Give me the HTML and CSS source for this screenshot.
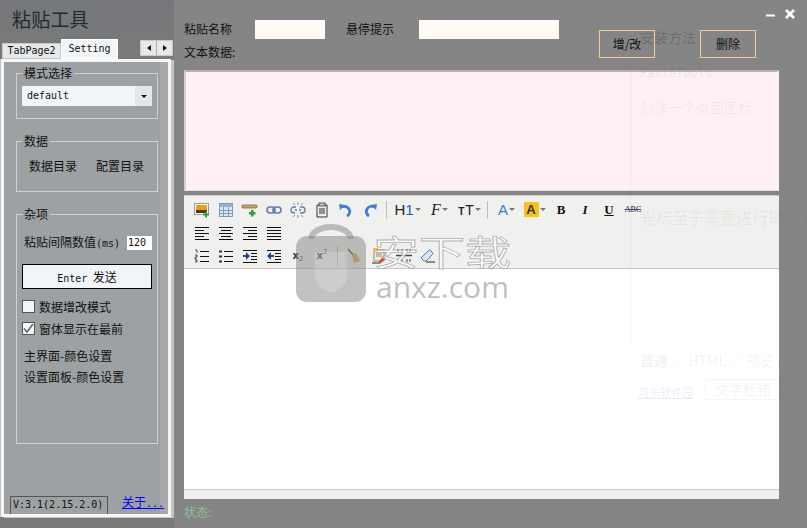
FILE: index.html
```html
<!DOCTYPE html>
<html lang="zh">
<head>
<meta charset="utf-8">
<title>粘贴工具</title>
<link rel="stylesheet" href="styles.css">
</head>
<body>
<div class="app">
  <aside class="side">
    <h1 class="title">粘贴工具</h1>
    <div class="tabrow">
      <span class="tab">TabPage2</span>
      <span class="tab active">Setting</span>
      <span class="spin"><i class="arr l"></i><i class="arr r"></i></span>
    </div>
    <div class="panel">
      <fieldset class="grp g1">
        <legend>模式选择</legend>
        <div class="combo"><span class="latin">default</span><span class="drop"><i></i></span></div>
      </fieldset>
      <fieldset class="grp g2">
        <legend>数据</legend>
        <div class="links"><span>数据目录</span><span>配置目录</span></div>
      </fieldset>
      <fieldset class="grp g3">
        <legend>杂项</legend>
        <div class="interval"><span>粘贴间隔数值<span class="latin">(ms)</span></span><span class="num latin">120</span></div>
        <div class="send"><span class="latin">Enter</span>&nbsp;&nbsp;发送</div>
        <div class="check"><span class="box"></span>数据增改模式</div>
        <div class="check c2"><span class="box"><svg width="13" height="13" viewBox="0 0 13 13"><path d="M2 6.500l3 3.500 6-8" fill="none" stroke="#666" stroke-width="1.600"/></svg></span>窗体显示在最前</div>
        <div class="plain p1">主界面-颜色设置</div>
        <div class="plain">设置面板-颜色设置</div>
      </fieldset>
      <div class="foot"><span class="ver latin">V:3.1(2.15.2.0)</span><a class="about" href="#">关于<span class="latin">...</span></a></div>
    </div>
  </aside>
  <main class="main">
    <div class="frow">
      <label class="l1">粘贴名称</label><span class="inp w1"></span>
      <label class="l2">悬停提示</label><span class="inp w2"></span>
      <span class="btn b1">增/改</span><span class="btn b2">删除</span>
    </div>
    <div class="tlabel">文本数据:</div>
    <div class="pink"></div>
    <div class="editor">
      <div class="bar">
        <div class="tr">
          <span class="ic"><svg width="16" height="16" viewBox="0 0 16 16"><rect x=".5" y="1.500" width="14" height="11" fill="#fff" stroke="#999"/><rect x="2" y="3" width="11" height="8" fill="#e8a010"/><rect x="2" y="8" width="11" height="3" fill="#4a3410"/><path d="M11 9.500h2v2h2v2h-2v2h-2v-2H9v-2h2z" fill="#3a9a3a"/></svg></span>
          <span class="ic"><svg width="16" height="16" viewBox="0 0 16 16"><rect x="1.500" y="1.500" width="13" height="13" fill="#dde8f5" stroke="#7f9db9"/><rect x="2" y="2" width="12" height="3" fill="#8fb0d8"/><path d="M1.500 8.500h13M1.500 11.500h13M5.500 5v9M10.500 5v9" stroke="#7f9db9"/></svg></span>
          <span class="ic"><svg width="18" height="16" viewBox="0 0 18 16"><rect x="1" y="3" width="15" height="3" rx="1" fill="#c8a468" stroke="#7a5a2a" stroke-width=".7"/><path d="M10 8h2.500v2h2v2.500h-2v2H10v-2H8V10h2z" fill="#3a9a3a"/></svg></span>
          <span class="ic"><svg width="16" height="16" viewBox="0 0 16 16"><g fill="none" stroke="#5d7da8" stroke-width="1.600"><rect x="1" y="5" width="8" height="6" rx="3"/><rect x="7" y="5" width="8" height="6" rx="3"/></g></svg></span>
          <span class="ic"><svg width="16" height="16" viewBox="0 0 16 16"><g fill="none" stroke="#5d7da8" stroke-width="1.300"><path d="M6 5H4a3 3 0 000 6h1M10 5h2a3 3 0 010 6h-2M5 8h2M9 8h2"/><path d="M8 0v3M8 13v3M3 1l2 2M13 1l-2 2M3 15l2-2M13 15l-2-2" stroke="#777" stroke-width=".8"/></g></svg></span>
          <span class="ic"><svg width="16" height="16" viewBox="0 0 16 16"><path d="M3 3h10v12H3z" fill="#eee" stroke="#333"/><rect x="5" y="1" width="6" height="3" fill="#ccc" stroke="#333" stroke-width=".8"/><path d="M5 7h6M5 9h6M5 11h6" stroke="#333"/></svg></span>
          <span class="ic"><svg width="16" height="16" viewBox="0 0 16 16"><path d="M1 2l6 1-5 5z" fill="#3b7fd4"/><path d="M4 5a5 5 0 115 9" fill="none" stroke="#3b7fd4" stroke-width="2.800"/></svg></span>
          <span class="ic"><svg width="16" height="16" viewBox="0 0 16 16"><path d="M15 2l-6 1 5 5z" fill="#3b7fd4"/><path d="M12 5a5 5 0 10-5 9" fill="none" stroke="#3b7fd4" stroke-width="2.800"/></svg></span>
          <span class="sep"></span>
          <span class="ic wide h"><span class="h1">H<b>1</b></span><i class="mini"></i></span>
          <span class="ic wide f"><span class="ff">F</span><i class="mini"></i></span>
          <span class="ic wide t"><span class="tt"><small>T</small>T</span><i class="mini"></i></span>
          <span class="sep"></span>
          <span class="ic wide a"><span class="ca">A</span><i class="mini"></i></span>
          <span class="ic wide a2"><span class="cb">A</span><i class="mini"></i></span>
          <span class="ic fmt b">B</span>
          <span class="ic fmt it">I</span>
          <span class="ic fmt un">U</span>
          <span class="ic fmt st">ABC</span>
        </div>
        <div class="tr">
          <span class="ic"><svg width="16" height="14" viewBox="0 0 16 14"><path d="M1 1.500h14M1 4.500h9M1 7.500h14M1 10.500h9M1 13.500h14" stroke="#111"/></svg></span>
          <span class="ic"><svg width="16" height="14" viewBox="0 0 16 14"><path d="M1 1.500h14M3 4.500h10M1 7.500h14M3 10.500h10M1 13.500h14" stroke="#111"/></svg></span>
          <span class="ic"><svg width="16" height="14" viewBox="0 0 16 14"><path d="M1 1.500h14M6 4.500h9M1 7.500h14M6 10.500h9M1 13.500h14" stroke="#111"/></svg></span>
          <span class="ic"><svg width="16" height="14" viewBox="0 0 16 14"><path d="M1 1.500h14M1 4.500h14M1 7.500h14M1 10.500h14M1 13.500h14" stroke="#111"/></svg></span>
        </div>
        <div class="tr">
          <span class="ic"><svg width="16" height="14" viewBox="0 0 16 14"><path d="M6 2.500h9M6 7.500h9M6 12.500h9" stroke="#111"/><path d="M1 1h2v3M1 6h2v2H1v2h2M1 11h2v2H1" fill="none" stroke="#225" stroke-width=".8"/></svg></span>
          <span class="ic"><svg width="16" height="14" viewBox="0 0 16 14"><path d="M6 2.500h9M6 7.500h9M6 12.500h9" stroke="#111"/><path d="M1 1.500h3v2H1zM1 6.500h3v2H1zM1 11.500h3v2H1z" fill="#334"/></svg></span>
          <span class="ic"><svg width="16" height="14" viewBox="0 0 16 14"><path d="M1 1.500h14M9 4.500h6M9 7.500h6M9 10.500h6M1 13.500h14" stroke="#111"/><path d="M1 6h3V3l4 4-4 4V8H1z" fill="#1f4a84"/></svg></span>
          <span class="ic"><svg width="16" height="14" viewBox="0 0 16 14"><path d="M1 1.500h14M9 4.500h6M9 7.500h6M9 10.500h6M1 13.500h14" stroke="#111"/><path d="M8 6H5V3L1 7l4 4V8h3z" fill="#1f4a84"/></svg></span>
          <span class="ic script"><b>x</b><sub>2</sub></span>
          <span class="ic script"><b>x</b><sup>2</sup></span>
          <span class="sep short"></span>
          <span class="ic broom"><svg width="16" height="16" viewBox="0 0 16 16"><path d="M2 1l6 7" stroke="#7a5a2a" stroke-width="1.500"/><path d="M6 7l4-2 4 8-6 2z" fill="#e0b060"/></svg></span>
          <span class="ic cnt"><svg width="18" height="18" viewBox="0 0 18 18"><rect x="3" y="3" width="10" height="11" fill="#f4f0d8" stroke="#888"/><path d="M2 1h5v3H2z" fill="#f0c030"/><path d="M5 7h6M5 9h6" stroke="#888"/><path d="M1 16h8" stroke="#225"/><path d="M8 14l7-7 2 2-7 7-2 1z" fill="#d8502a"/></svg></span>
          <span class="ic"><svg width="16" height="16" viewBox="0 0 16 16"><path d="M0 7.500h16" stroke="#444" stroke-width="1.500"/><path d="M2 1v3M6 1v3M11 1v3M14 1v3M2 11v3M6 11v3M11 11v3M14 11v3M1 2.500h2M10 2.500h2M13 2.500h2" stroke="#2b4c80"/></svg></span>
          <span class="ic"><svg width="16" height="16" viewBox="0 0 16 16"><path d="M1 10l7-7a2 2 0 013 0l1 1a2 2 0 010 3l-6 6H4z" fill="#dbe6f2" stroke="#5d7da8"/><path d="M6 14h9" stroke="#222"/></svg></span>
        </div>
      </div>
      <div class="canvas"></div>
      <div class="estat"></div>
    </div>
    <div class="status">状态:</div>
  </main>
</div>
<div class="ghost">
  <span class="vline"></span>
  <span class="g g-a">安装方法</span>
  <span class="g g-b">PasteTools</span>
  <span class="g g-c">创建一个桌面图标</span>
  <span class="g g-d">光标至于需要进行输入文</span>
  <span class="g g-e"><b>普通</b> ╱ HTML ╱ 预览 ╱</span>
  <span class="g g-f">河东软件园</span>
  <span class="g g-g">文字检错</span>
</div>
<div class="wm">
  <svg class="bag" width="72" height="82" viewBox="0 0 72 82"><path d="M16 18C18 2 54 2 56 18" fill="none" stroke="#8f8f8f" stroke-opacity=".55" stroke-width="6"/><rect x="1" y="15" width="70" height="66" rx="11" fill="#808080" fill-opacity=".48"/><path d="M20 31h32v24q0 10-16 17q-16-7-16-17z" fill="#fff" fill-opacity=".18"/></svg>
  <div class="wmt"><div class="wm-cn">安下载</div><div class="wm-en">anxz.com</div></div>
</div>
<div class="winbtns"><svg width="40" height="14" viewBox="0 0 40 14"><path d="M0 7.500h9" stroke="#fff" stroke-width="2"/><path d="M20 2l8 8M28 2l-8 8" stroke="#fff" stroke-width="2.600"/></svg></div>
</body>
</html>
```
FILE: styles.css
```css
* { box-sizing: border-box; }
html, body { margin: 0; height: 100%; }
body {
  width: 807px; height: 528px; overflow: hidden; position: relative;
  background: #858585;
  font: 12px/14px "Noto Sans CJK SC", "Liberation Sans", sans-serif;
  color: #111;
}
.latin { font-family: "DejaVu Sans Mono", "Liberation Mono", monospace; font-size: 10px; }
.app { display: flex; height: 528px; }
.side { width: 174px; flex: none; background: linear-gradient(#75777a, #7c7c7c 20%, #7a7a7a); height: 528px; }
.title { margin: 0; padding: 7px 0 0 12px; height: 40px; font-size: 19px; line-height: 24px; font-weight: 400; color: #24292f; letter-spacing: .2px; }
.tabrow { display: flex; align-items: flex-end; height: 19px; padding-left: 2px; position: relative; }
.tab { height: 16px; width: 59px; background: #e6e8ea; border: 1px solid #c6c9cc; font: 10px/14px "DejaVu Sans Mono", monospace; text-align: center; color: #111; }
.tab.active { height: 20px; width: 57px; background: #f1f5f8; border-color: #fff; line-height: 17px; }
.spin { position: absolute; left: 140px; top: 0; width: 33px; height: 16px; display: flex; background: #e6e8ea; border: 1px solid #c6c9cc; }
.arr { flex: 1; display: flex; align-items: center; justify-content: center; }
.arr.l { border-right: 1px solid #aaa; }
.arr::before { content: ""; border: 3px solid transparent; }
.arr.l::before { border-right: 4px solid #111; border-left: 0; }
.arr.r::before { border-left: 4px solid #111; border-right: 0; }
.panel { width: 170px; height: 458px; margin-left: 1px; border: 3px solid #f6f6f6; box-shadow: 3px 1px 0 #c4c4c4, -1px 0 0 #c4c4c4; background: linear-gradient(90deg, #9da1a4 0 156px, #a9a9a9 156px); padding: 4px 0 0 12px; position: relative; }
.grp { width: 142px; margin: 0; padding: 0 5px; border: 1px solid #cfd2d4; }
.grp legend { padding: 0 2px; margin-left: 0; font-size: 12px; line-height: 14px; }
.g1 { height: 53px; }
.g2 { height: 58px; margin-top: 15px; }
.g3 { height: 237px; margin-top: 15px; }
.combo { height: 20px; margin-top: 6px; width: 130px; background: #f1f5f8; padding-left: 5px; line-height: 20px; display: flex; justify-content: space-between; }
.drop { width: 17px; background: #e4e7ea; display: flex; align-items: center; justify-content: center; }
.drop i { border: 3px solid transparent; border-top: 3px solid #111; border-bottom: 0; border-left-width: 3px; }
.links { display: flex; gap: 19px; padding: 11px 0 0 7px; }
.interval { display: flex; justify-content: space-between; align-items: center; margin-top: 14px; width: 130px; padding-left: 2px; white-space: nowrap; }
.num { width: 25px; height: 14px; background: #fff; padding-left: 1px; line-height: 14px; font-size: 10px; }
.send { width: 130px; height: 25px; margin-top: 13px; background: #f1f5f8; border: 1px solid #000; text-align: center; line-height: 23px; }
.check { display: flex; align-items: center; gap: 4px; margin-top: 11px; height: 13px; }
.check.c2 { margin-top: 9px; }
.box { width: 13px; height: 13px; background: #f1f5f8; border: 1px solid #555; display: block; flex: none; line-height: 0; }
.box svg { margin: -1px; display: block; }
.plain { padding-left: 2px; margin-top: 7px; }
.p1 { margin-top: 14px; }
.foot { position: absolute; left: 6px; bottom: 0; display: flex; gap: 14px; align-items: flex-end; }
.ver { width: 98px; height: 18px; border: 1px solid #555; border-bottom: 0; padding-left: 2px; line-height: 15px; }
.about { color: #00f; text-decoration: underline; padding-bottom: 3px; white-space: nowrap; }
.main { flex: 1; padding: 0 28px 0 10px; min-width: 0; position: relative; }
.frow { display: flex; align-items: center; height: 20px; margin-top: 19px; }
.l1 { width: 71px; }
.w1 { width: 70px; }
.l2 { width: 73px; margin-left: 21px; }
.w2 { width: 140px; }
.inp { height: 19px; background: #fffaf3; }
.btn { position: absolute; top: 30px; width: 56px; height: 28px; border: 1px solid #f0cf94; text-align: center; line-height: 26px; }
.b1 { left: 425px; }
.b2 { left: 526px; }
.tlabel { height: 14px; margin-top: 6px; }
.pink { height: 121px; margin-top: 11px; background: #fff0f5; border-top: 2px solid #b3b3b3; border-left: 2px solid #cfcfcf; border-right: 2px solid #f4f4f4; border-bottom: 1px solid #ddd; }
.editor { margin-top: 4px; height: 304px; display: flex; flex-direction: column; background: #fff; }
.bar { height: 74px; background: #f0f0ee; border-top: 1px solid #ccc; border-bottom: 1px solid #c8c8c8; padding: 2px 0 0 6px; flex: none; }
.tr { display: flex; height: 23px; align-items: center; }
.ic { width: 24px; height: 20px; display: flex; align-items: center; justify-content: center; flex: none; }
.sep { width: 1px; height: 18px; background: #bbb; margin: 0 5px 0 4px; flex: none; }
.sep.short { height: 20px; margin: 0 3px 0 3px; }
.wide { width: 33px; gap: 1px; }
.ic.h { width: 31px; }
.ic.t { width: 27px; }
.ic.a { width: 27px; }
.ic.a2 { width: 29px; }
.mini { width: 0; height: 0; border: 3px solid transparent; border-top: 3px solid #777; border-bottom: 0; }
.h1 { font: 15px/1 "Liberation Sans", sans-serif; color: #222; }
.h1 b { font-weight: 400; color: #1a56c4; }
.ff { font: italic 16px/1 "Liberation Serif", serif; color: #222; }
.tt { font: 14px/1 "Liberation Sans", sans-serif; color: #222; }
.tt small { font-size: 10px; font-weight: 700; margin-right: 1px; }
.ca { font: 15px/1 "Liberation Sans", sans-serif; color: #3b7fd4; }
.cb { font: 700 13px/15px "Liberation Sans", sans-serif; color: #333; background: #f7c219; width: 15px; text-align: center; display: block; }
.fmt { font: 700 13px/1 "Liberation Serif", serif; color: #111; }
.it { font-style: italic; }
.un { text-decoration: underline; }
.st { font-size: 8px; font-weight: 400; text-decoration: line-through; text-decoration-color: #3a4a9a; }
.script { font: 700 10px/1 "DejaVu Sans", sans-serif; color: #333; }
.script sub { font-size: 7px; font-weight: 400; color: #667; align-self: flex-end; margin-bottom: 3px; }
.script sup { font-size: 7px; font-weight: 400; color: #667; align-self: flex-start; margin-top: 3px; }
.broom { margin-left: 1px; }
.cnt { margin-left: 2px; }
.canvas { flex: 1; }
.estat { height: 10px; background: #f0f0ee; border-top: 1px solid #ccc; flex: none; }
.status { color: #8fc08f; margin-top: 6px; }
.ghost { position: absolute; inset: 0; pointer-events: none; }
.vline { position: absolute; left: 630px; top: 0; width: 1px; height: 345px; background: rgba(60, 60, 60, .05); }
.g { position: absolute; white-space: nowrap; color: rgba(60, 60, 60, .07); font-size: 14px; line-height: 18px; }
.g-a { left: 640px; top: 28px; color: rgba(30, 30, 30, .24); }
.g-b { left: 640px; top: 64px; font: 12px/18px "DejaVu Sans Mono", monospace; color: rgba(60, 60, 60, .1); }
.g-c { left: 640px; top: 98px; }
.g-d { left: 640px; top: 207px; font-size: 16px; line-height: 20px; }
.g-e { left: 640px; top: 351px; }
.g-f { left: 638px; top: 383px; font-size: 11px; color: rgba(40, 40, 200, .1); text-decoration: underline; }
.g-g { left: 705px; top: 379px; width: 76px; height: 21px; text-align: center; border: 1px solid rgba(60, 60, 60, .05); }
.wm { position: absolute; left: 295px; top: 221px; display: flex; gap: 6px; pointer-events: none; }
.bag { display: block; }
.wmt { padding-top: 5px; }
.wm-cn { font-size: 46px; line-height: 50px; height: 46px; font-weight: 400; color: rgba(255, 255, 255, .7); -webkit-text-stroke: 1px rgba(128, 128, 128, .6); white-space: nowrap; transform: scaleY(.76); transform-origin: 50% 50%; }
.wm-en { font: 30px/30px "Open Sans", sans-serif; color: rgba(128, 128, 128, .5); white-space: nowrap; padding-left: 3px; }
.winbtns { position: absolute; left: 766px; top: 8px; line-height: 0; }
```
